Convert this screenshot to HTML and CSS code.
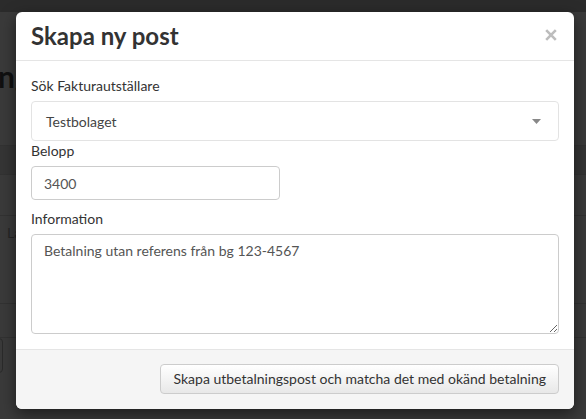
FILE: index.html
```html
<!DOCTYPE html>
<html lang="sv">
<head>
<meta charset="utf-8">
<title>Skapa ny post</title>
<link rel="stylesheet" href="styles.css">
</head>
<body>
<div class="page">
  <div class="topbar"></div>
  <div class="content">
    <h1 class="page-title">ng</h1>
    <div class="row r1"></div>
    <div class="row r2"></div>
    <div class="row r3"></div>
    <div class="row r4"><span class="cell">La</span></div>
    <div class="row r5"></div>
    <div class="bg-btn"></div>
  </div>
</div>

<div class="modal">
  <div class="modal-header">
    <h4 class="modal-title">Skapa ny post</h4>
    <span class="close">
      <svg width="12" height="12" viewBox="0 0 12 12"><path d="M1.2 1.2L10.8 10.8M10.8 1.2L1.2 10.8" stroke="#bdbdbd" stroke-width="2.6" stroke-linecap="butt"/></svg>
    </span>
  </div>
  <div class="modal-body">
    <label class="lbl">Sök Fakturautställare</label>
    <div class="select">
      <span>Testbolaget</span>
      <svg class="caret" width="9" height="5" viewBox="0 0 9 5"><path d="M0 0H9L4.5 5Z" fill="#888"/></svg>
    </div>
    <label class="lbl">Belopp</label>
    <input class="input" type="text" value="3400">
    <label class="lbl lbl-info">Information</label>
    <textarea class="textarea">Betalning utan referens från bg 123-4567</textarea>
  </div>
  <div class="modal-footer">
    <button class="btn">Skapa utbetalningspost och matcha det med okänd betalning</button>
  </div>
</div>
</body>
</html>
```

FILE: styles.css
```css
* { box-sizing: border-box; }
html, body { margin: 0; padding: 0; }
body {
  width: 586px;
  height: 419px;
  overflow: hidden;
  background: #3a3a3a;
  font-family: Lato, "Open Sans", sans-serif;
  color: #333;
}
.page { width: 586px; height: 419px; }
.topbar { height: 12px; background: #2b2b2b; }
.content { display: flex; flex-direction: column; }
.page-title {
  margin: 46px 0 0 -2px;
  height: 59px;
  font-size: 30px;
  font-weight: 700;
  color: #101010;
  line-height: 36px;
}
.row { border-bottom: 1px solid #323232; }
.r1 { height: 29px; }
.r2 { height: 29px; background: #353535; }
.r3 { height: 41px; }
.r4 { height: 88px; padding: 6px 0 0 7px; }
.r5 { height: 34px; }
.cell { font-size: 14px; color: #262626; }
.bg-btn {
  width: 30px; height: 35px;
  margin-left: -27px;
  border: 1px solid #2a2a2a;
  border-radius: 4px;
}

.modal {
  position: absolute;
  left: 16px;
  top: 12px;
  width: 558px;
  background: #fff;
  border-radius: 6px;
  box-shadow: 0 5px 15px rgba(0,0,0,0.5);
  overflow: hidden;
}
.modal-header {
  height: 49px;
  border-bottom: 1px solid #e5e5e5;
  padding: 0 15px;
  display: flex;
  align-items: center;
  justify-content: space-between;
}
.modal-title {
  margin: 0;
  font-size: 24px;
  font-weight: 700;
  line-height: 30px;
  color: #333;
  padding-bottom: 1px;
}
.close { display: flex; margin-right: 2px; margin-top: -2px; }
.modal-body {
  padding: 15px;
  display: flex;
  flex-direction: column;
  align-items: flex-start;
}
.lbl {
  display: block;
  font-size: 14px;
  line-height: 20px;
  margin-bottom: 5px;
  color: #333;
}
.select {
  width: 100%;
  height: 40px;
  border: 1px solid #e3e3e3;
  border-radius: 4px;
  padding: 0 17px 0 14px;
  display: flex;
  align-items: center;
  justify-content: space-between;
  font-size: 14px;
  color: #444;
}
.caret { margin-top: 1px; }
.input {
  width: 249px;
  height: 34px;
  border: 1px solid #ccc;
  border-radius: 4px;
  padding: 0 12px;
  font-family: Lato, sans-serif;
  font-size: 14px;
  color: #555;
  margin: 0 0 9px 0;
  outline: none;
}
.textarea {
  width: 100%;
  height: 100px;
  border: 1px solid #ccc;
  border-radius: 4px;
  padding: 6px 12px;
  font-family: Lato, sans-serif;
  font-size: 14px;
  line-height: 20px;
  color: #555;
  margin: 0;
  display: block;
  outline: none;
}
.modal-footer {
  border-top: 1px solid #e5e5e5;
  background: #f5f5f5;
  padding: 14px 15px 15px;
  display: flex;
  justify-content: flex-end;
}
.btn {
  height: 30px;
  padding: 0 12px;
  border: 1px solid #ccc;
  border-radius: 4px;
  background: linear-gradient(#ffffff, #e8e8e8);
  font-family: Lato, sans-serif;
  font-size: 14px;
  color: #333;
  line-height: 28px;
}
```
